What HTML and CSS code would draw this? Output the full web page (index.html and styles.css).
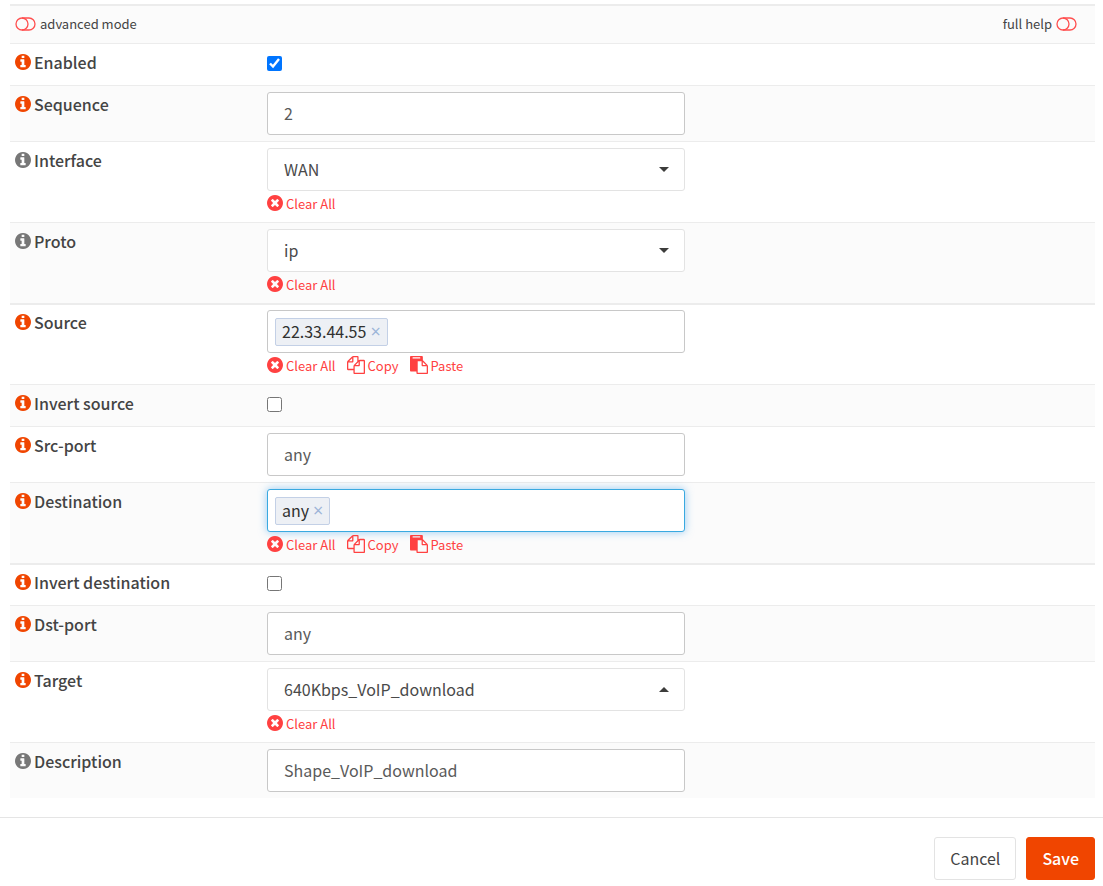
FILE: index.html
```html
<!DOCTYPE html>
<html lang="en">
<head>
<meta charset="utf-8">
<meta name="viewport" content="width=device-width, initial-scale=1">
<title>Edit rule</title>
<link rel="stylesheet" href="styles.css">
</head>
<body>
<svg class="sprite" aria-hidden="true">
  <symbol id="info" viewBox="128 128 1536 1536"><path d="M1152 1376v-160q0-14-9-23t-23-9h-96v-512q0-14-9-23t-23-9h-320q-14 0-23 9t-9 23v160q0 14 9 23t23 9h96v320h-96q-14 0-23 9t-9 23v160q0 14 9 23t23 9h448q14 0 23-9t9-23zm-128-896v-160q0-14-9-23t-23-9h-192q-14 0-23 9t-9 23v160q0 14 9 23t23 9h192q14 0 23-9t9-23zm640 416q0 209-103 385.500t-279.500 279.500-385.500 103-385.500-103-279.500-279.500-103-385.500 103-385.500 279.500-279.500 385.500-103 385.500 103 279.500 279.500 103 385.500z"/></symbol>
  <symbol id="times" viewBox="128 128 1536 1536"><path d="M1277 1122q0-26-19-45l-181-181 181-181q19-19 19-45 0-27-19-46l-90-90q-19-19-46-19-26 0-45 19l-181 181-181-181q-19-19-45-19-27 0-46 19l-90 90q-19 19-19 46 0 26 19 45l181 181-181 181q-19 19-19 45 0 27 19 46l90 90q19 19 46 19 26 0 45-19l181-181 181 181q19 19 45 19 27 0 46-19l90-90q19-19 19-46zm387-226q0 209-103 385.500t-279.500 279.500-385.500 103-385.500-103-279.500-279.500-103-385.500 103-385.500 279.500-279.500 385.500-103 385.500 103 279.500 279.500 103 385.500z"/></symbol>
  <symbol id="copy" viewBox="0 0 1792 1792"><path d="M1696 384q40 0 68 28t28 68v1216q0 40-28 68t-68 28h-960q-40 0-68-28t-28-68v-288h-544q-40 0-68-28t-28-68v-672q0-40 20-88t48-76l408-408q28-28 76-48t88-20h416q40 0 68 28t28 68v328q68-40 128-40h416zm-544 213l-299 299h299v-299zm-640-384l-299 299h299v-299zm196 647l316-316v-416h-384v416q0 40-28 68t-68 28h-416v640h512v-256q0-40 20-88t48-76zm956 804v-1152h-384v416q0 40-28 68t-68 28h-416v640h896z"/></symbol>
  <symbol id="paste" viewBox="0 0 1792 1792"><path d="M768 1664h896v-640h-416q-40 0-68-28t-28-68v-416h-384v1152zm256-1440v-64q0-13-9.500-22.500t-22.500-9.500h-704q-13 0-22.500 9.500t-9.500 22.500v64q0 13 9.500 22.500t22.500 9.500h704q13 0 22.500-9.500t9.500-22.500zm256 672h299l-299-299v299zm512 128v672q0 40-28 68t-68 28h-960q-40 0-68-28t-28-68v-160h-544q-40 0-68-28t-28-68v-1344q0-40 28-68t68-28h1088q40 0 68 28t28 68v328q21 13 36 28l408 408q28 28 48 76t20 88z"/></symbol>
  <symbol id="toggle" viewBox="0 0 21 14"><g fill="none" stroke="currentColor" stroke-width="1.3"><circle cx="7" cy="7" r="6"/><path d="M7 1h7a6 6 0 0 1 0 12H7"/></g></symbol>
</svg>

<form>
  <div class="rows">
    <div class="row toolbar">
      <button type="button" class="toggle"><svg class="icon-toggle"><use href="#toggle"/></svg>advanced mode</button>
      <button type="button" class="toggle">full help<svg class="icon-toggle"><use href="#toggle"/></svg></button>
    </div>

    <div class="row">
      <div class="name"><a href="#" class="help" aria-label="Help"><svg class="icon"><use href="#info"/></svg></a><label for="enabled">Enabled</label></div>
      <div class="field check"><input type="checkbox" id="enabled" checked></div>
    </div>

    <div class="row">
      <div class="name"><a href="#" class="help" aria-label="Help"><svg class="icon"><use href="#info"/></svg></a><label for="sequence">Sequence</label></div>
      <div class="field"><input type="text" class="control" id="sequence" value="2"></div>
    </div>

    <div class="row">
      <div class="name"><span class="help muted"><svg class="icon"><use href="#info"/></svg></span><label for="interface">Interface</label></div>
      <div class="field">
        <div class="picker"><select class="control" id="interface"><option>WAN</option></select></div>
        <div class="actions"><a href="#"><svg class="icon"><use href="#times"/></svg>Clear All</a></div>
      </div>
    </div>

    <div class="row">
      <div class="name"><span class="help muted"><svg class="icon"><use href="#info"/></svg></span><label for="proto">Proto</label></div>
      <div class="field">
        <div class="picker"><select class="control" id="proto"><option>ip</option></select></div>
        <div class="actions"><a href="#"><svg class="icon"><use href="#times"/></svg>Clear All</a></div>
      </div>
    </div>

    <div class="row group">
      <div class="name"><a href="#" class="help" aria-label="Help"><svg class="icon"><use href="#info"/></svg></a><label for="source">Source</label></div>
      <div class="field">
        <div class="control tokens">
          <span class="token">22.33.44.55<button type="button" aria-label="Remove 22.33.44.55">×</button></span>
          <input type="text" id="source">
        </div>
        <div class="actions">
          <a href="#"><svg class="icon"><use href="#times"/></svg>Clear All</a>
          <a href="#"><svg class="icon-wide"><use href="#copy"/></svg>Copy</a>
          <a href="#"><svg class="icon-wide"><use href="#paste"/></svg>Paste</a>
        </div>
      </div>
    </div>

    <div class="row">
      <div class="name"><a href="#" class="help" aria-label="Help"><svg class="icon"><use href="#info"/></svg></a><label for="invert-source">Invert source</label></div>
      <div class="field check"><input type="checkbox" id="invert-source"></div>
    </div>

    <div class="row">
      <div class="name"><a href="#" class="help" aria-label="Help"><svg class="icon"><use href="#info"/></svg></a><label for="src-port">Src-port</label></div>
      <div class="field"><input type="text" class="control" id="src-port" value="any"></div>
    </div>

    <div class="row">
      <div class="name"><a href="#" class="help" aria-label="Help"><svg class="icon"><use href="#info"/></svg></a><label for="destination">Destination</label></div>
      <div class="field">
        <div class="control tokens active">
          <span class="token">any<button type="button" aria-label="Remove any">×</button></span>
          <input type="text" id="destination">
        </div>
        <div class="actions">
          <a href="#"><svg class="icon"><use href="#times"/></svg>Clear All</a>
          <a href="#"><svg class="icon-wide"><use href="#copy"/></svg>Copy</a>
          <a href="#"><svg class="icon-wide"><use href="#paste"/></svg>Paste</a>
        </div>
      </div>
    </div>

    <div class="row group">
      <div class="name"><a href="#" class="help" aria-label="Help"><svg class="icon"><use href="#info"/></svg></a><label for="invert-destination">Invert destination</label></div>
      <div class="field check"><input type="checkbox" id="invert-destination"></div>
    </div>

    <div class="row">
      <div class="name"><a href="#" class="help" aria-label="Help"><svg class="icon"><use href="#info"/></svg></a><label for="dst-port">Dst-port</label></div>
      <div class="field"><input type="text" class="control" id="dst-port" value="any"></div>
    </div>

    <div class="row">
      <div class="name"><a href="#" class="help" aria-label="Help"><svg class="icon"><use href="#info"/></svg></a><label for="target">Target</label></div>
      <div class="field">
        <div class="picker open"><select class="control" id="target"><option>640Kbps_VoIP_download</option></select></div>
        <div class="actions"><a href="#"><svg class="icon"><use href="#times"/></svg>Clear All</a></div>
      </div>
    </div>

    <div class="row">
      <div class="name"><span class="help muted"><svg class="icon"><use href="#info"/></svg></span><label for="description">Description</label></div>
      <div class="field"><input type="text" class="control" id="description" value="Shape_VoIP_download"></div>
    </div>
  </div>

  <div class="footer">
    <button type="button" class="btn">Cancel</button>
    <button type="submit" class="btn primary">Save</button>
  </div>
</form>
</body>
</html>
```
FILE: styles.css
```css
* { box-sizing: border-box; }

body {
  margin: 0;
  background: #fff;
  color: #444;
  font: 16px/24px "Noto Sans CJK SC", "Open Sans", sans-serif;
}

input, select, button { font: inherit; color: inherit; }
button { cursor: pointer; }
a { text-decoration: none; }

svg { flex: none; fill: currentColor; }
.sprite { display: none; }
.icon { display: block; width: 16px; height: 16px; }
.icon-wide { display: block; width: 18px; height: 18px; }
.icon-toggle { display: block; width: 21px; height: 14px; color: #ff4f4f; }

.rows { padding: 4px 8px 0 10px; }

.row {
  display: grid;
  grid-template-columns: 252px minmax(0, 1fr);
  padding: 6px 5px;
  border-top: 1px solid #ececec;
}
.row:nth-child(odd) { background: #fbfbfb; }
.row:nth-child(even) { background: #fff; }
.row.group { border-top-width: 2px; padding-top: 5px; }

.toolbar {
  display: flex;
  justify-content: space-between;
  border-top-width: 2px;
  padding: 6px 18px 7px 5px;
}
.toggle {
  display: flex;
  align-items: center;
  gap: 4px;
  padding: 0;
  border: 0;
  background: none;
  font-size: 13px;
  line-height: 24px;
}

.name {
  display: flex;
  align-items: center;
  align-self: start;
  gap: 3px;
  font-weight: 500;
}
.help { color: #f04500; }
.muted { color: #777; }

.field { max-width: 418px; }
.check { padding: 6px 0 8px; }
.check input { display: block; width: 15px; height: 15px; margin: 0; }

.control {
  display: block;
  width: 100%;
  height: 43px;
  padding: 0 16px 2px;
  border: 1px solid #c8c8c8;
  border-radius: 3px;
  background: #fff;
  color: #5a5a5a;
  outline: 0;
}

.picker { position: relative; }
.picker select { appearance: none; border-color: #e3e3e3; color: #4a4a4a; }
.picker::after {
  content: "";
  position: absolute;
  top: 19px;
  right: 16px;
  border: 5px solid transparent;
  border-top-color: #3c3c3b;
  border-bottom: 0;
  pointer-events: none;
}
.picker.open::after { border-top: 0; border-bottom: 5px solid #3c3c3b; }

.tokens { display: flex; align-items: center; gap: 4px; padding: 0 7px; }
.tokens input { flex: 1; min-width: 0; border: 0; outline: 0; background: none; }
.tokens.active { border-color: #39a9e0; box-shadow: 0 0 8px rgba(82, 168, 236, .6); }
.token {
  display: flex;
  align-items: center;
  gap: 4px;
  height: 28px;
  padding: 0 6px 2px;
  border: 1px solid #c3d0e6;
  border-radius: 2px;
  background: #edf0f5;
  color: #303030;
}
.token button {
  padding: 0;
  border: 0;
  background: none;
  color: #9bb4d8;
  font: 18px/24px "Open Sans", sans-serif;
}

.actions { display: flex; gap: 11px; height: 25px; }
.actions a {
  display: flex;
  align-items: center;
  gap: 3px;
  color: #ff4141;
  font-size: 13px;
}
.actions svg { margin-bottom: 2px; }

.footer {
  display: flex;
  justify-content: flex-end;
  gap: 10px;
  margin-top: 19px;
  padding: 19px 8px 6px;
  border-top: 1px solid #e5e5e5;
}
.btn {
  height: 43px;
  padding: 0 15px 2px;
  border: 1px solid #e3e3e3;
  border-radius: 3px;
  background: #fff;
}
.btn.primary { border-color: #f04500; background: #f04500; color: #fff; font-weight: 500; }
```
